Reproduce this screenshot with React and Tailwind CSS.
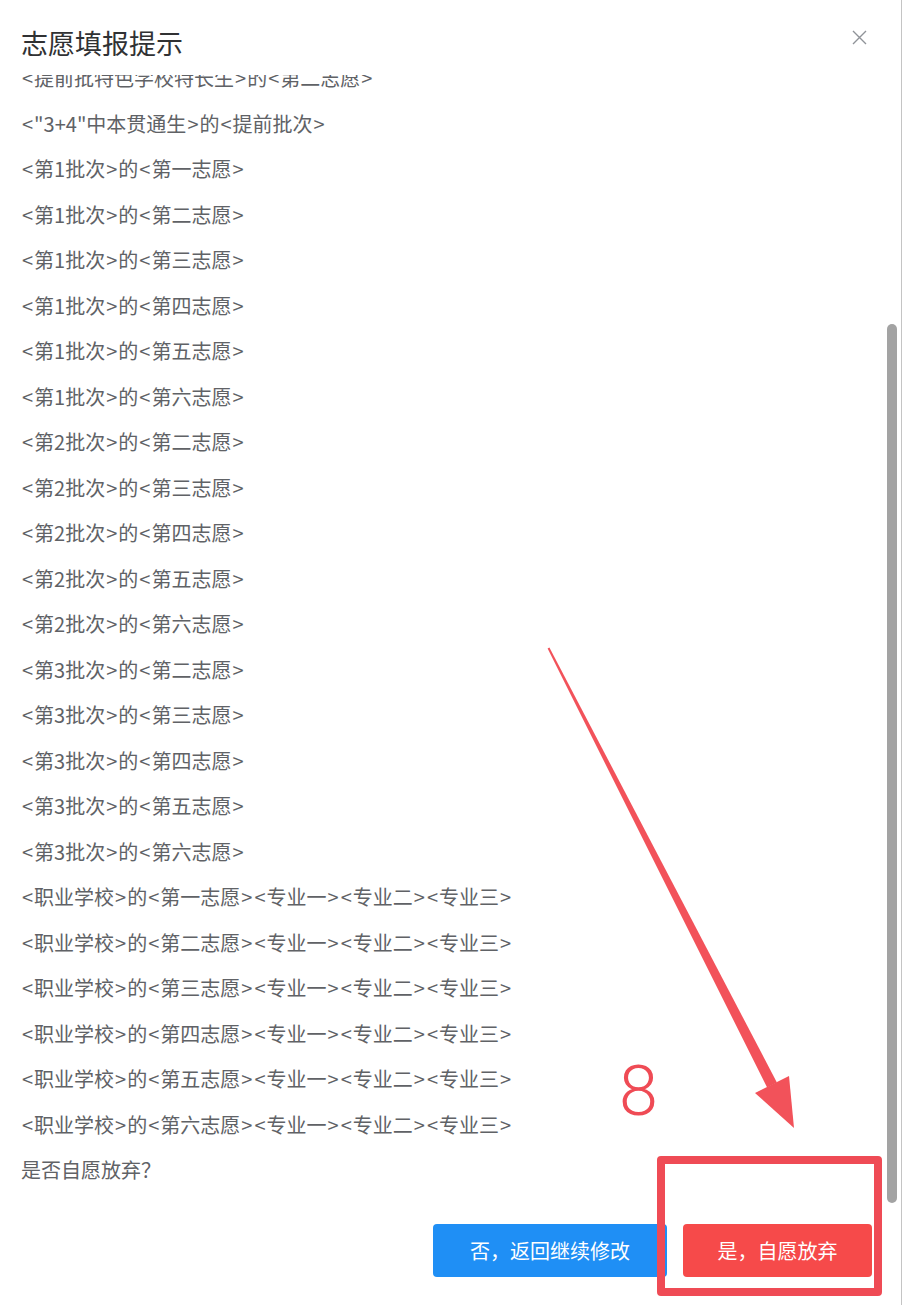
const lines = [
  '<提前批特色学校特长生>的<第二志愿>',
  '<"3+4"中本贯通生>的<提前批次>',
  '<第1批次>的<第一志愿>',
  '<第1批次>的<第二志愿>',
  '<第1批次>的<第三志愿>',
  '<第1批次>的<第四志愿>',
  '<第1批次>的<第五志愿>',
  '<第1批次>的<第六志愿>',
  '<第2批次>的<第二志愿>',
  '<第2批次>的<第三志愿>',
  '<第2批次>的<第四志愿>',
  '<第2批次>的<第五志愿>',
  '<第2批次>的<第六志愿>',
  '<第3批次>的<第二志愿>',
  '<第3批次>的<第三志愿>',
  '<第3批次>的<第四志愿>',
  '<第3批次>的<第五志愿>',
  '<第3批次>的<第六志愿>',
  '<职业学校>的<第一志愿><专业一><专业二><专业三>',
  '<职业学校>的<第二志愿><专业一><专业二><专业三>',
  '<职业学校>的<第三志愿><专业一><专业二><专业三>',
  '<职业学校>的<第四志愿><专业一><专业二><专业三>',
  '<职业学校>的<第五志愿><专业一><专业二><专业三>',
  '<职业学校>的<第六志愿><专业一><专业二><专业三>',
  '是否自愿放弃？',
]

// the brackets in the original font are a bit wider
function Line({ text }) {
  const parts = text.split(/([<>])/)
  return (
    <p className="text-[20px] leading-[45.5px] text-[#606266] whitespace-nowrap">
      {parts.map((p, i) =>
        p === '<' || p === '>' ? (
          <span key={i} className="px-[1px]">{p}</span>
        ) : (
          p
        )
      )}
    </p>
  )
}

export default function App() {
  return (
    <div className="relative w-[903px] h-[1305px] bg-white overflow-hidden font-['Noto_Sans_CJK_SC',sans-serif]">
      {/* header */}
      <div className="flex justify-between items-start h-[75px] pt-[25px] pl-[21px] pr-[36px]">
        <h2 className="text-[27px] leading-[36px] text-[#303133]">志愿填报提示</h2>
        <button className="mt-[5px] w-[15px] h-[15px] text-[#909399]">
          <svg viewBox="0 0 15 15" width="15" height="15" stroke="currentColor" strokeWidth="1.4" fill="none">
            <path d="M1 1L14 14M14 1L1 14" />
          </svg>
        </button>
      </div>

      {/* body, scrolled a little */}
      <div className="h-[1120px] overflow-hidden pl-[21px]">
        <div className="-mt-[20px]">
          {lines.map((t, i) => (
            <Line key={i} text={t} />
          ))}
        </div>
      </div>

      {/* footer */}
      <div className="flex justify-end gap-[16px] pt-[29px] pr-[31px]">
        <button className="w-[234px] h-[53px] rounded-[4px] bg-[#1f8ff5] text-white text-[20px]">否，返回继续修改</button>
        <button className="w-[189px] h-[53px] rounded-[4px] bg-[#f64a4a] text-white text-[20px]">是，自愿放弃</button>
      </div>

      {/* scrollbar */}
      <div className="absolute left-[887px] top-[324px] w-[10px] h-[879px] rounded-full bg-[#a3a3a3]" />
      <div className="absolute left-[901px] top-0 w-px h-full bg-[#c4c4c4]" />

      {/* annotations */}
      <div className="absolute left-[657px] top-[1156px] w-[225px] h-[140px] border-[8px] border-[#ef4b55] rounded-[4px]" />
      <span className="absolute left-[619px] top-[1056px] text-[70px] leading-none font-light text-[#ef4b55] font-['Roboto',sans-serif]">8</span>
      <svg className="absolute inset-0 pointer-events-none" width="903" height="1305">
        <polygon points="549.4,647.5 547.6,648.5 767.1,1087.5 776.9,1082.5" fill="#f2525a" />
        <polygon points="755,1093 789,1076 794,1128" fill="#f2525a" />
      </svg>
    </div>
  )
}
